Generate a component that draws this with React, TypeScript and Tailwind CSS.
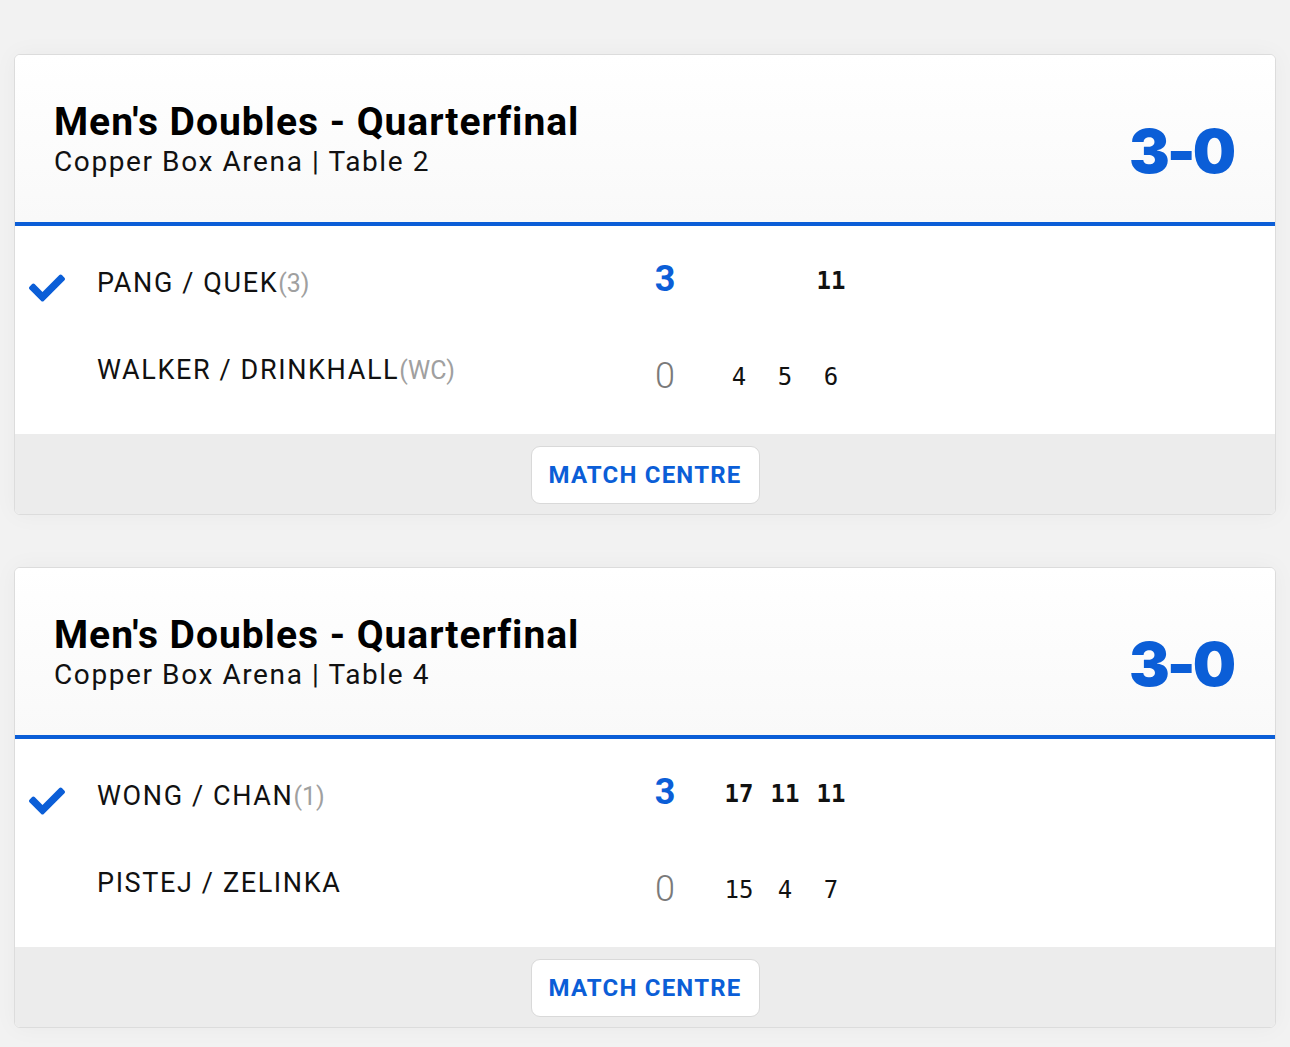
import { FaCheck } from 'react-icons/fa';

interface Team {
  name: string;
  seed?: string;
  sets: number;
  games: (number | null)[];
  winner?: boolean;
}

interface Match {
  title: string;
  venue: string;
  score: string;
  teams: Team[];
}

const matches: Match[] = [
  {
    title: "Men's Doubles - Quarterfinal",
    venue: 'Copper Box Arena | Table 2',
    score: '3-0',
    teams: [
      { name: 'PANG / QUEK', seed: '(3)', sets: 3, games: [null, null, 11], winner: true },
      { name: 'WALKER / DRINKHALL', seed: '(WC)', sets: 0, games: [4, 5, 6] },
    ],
  },
  {
    title: "Men's Doubles - Quarterfinal",
    venue: 'Copper Box Arena | Table 4',
    score: '3-0',
    teams: [
      { name: 'WONG / CHAN', seed: '(1)', sets: 3, games: [17, 11, 11], winner: true },
      { name: 'PISTEJ / ZELINKA', sets: 0, games: [15, 4, 7] },
    ],
  },
];

const TeamRow = ({ team }: { team: Team }) => (
  <div className="flex items-center h-[87px]">
    <div className="w-[82px] flex-shrink-0 pl-[14px] pt-[8px] text-[#0b5ed7]">
      {team.winner && <FaCheck size={36} />}
    </div>
    <div className="w-[544px] flex-shrink-0 flex items-baseline font-['Roboto',sans-serif] text-[27px] tracking-[0.06em] text-[#111]">
      <span>{team.name}</span>
      {team.seed && <span className="text-[25px] text-[#a0a0a0] tracking-normal">{team.seed}</span>}
    </div>
    <div
      className={`w-[48px] text-center font-['Roboto',sans-serif] text-[36px] ${
        team.winner ? 'font-bold text-[#0b5ed7] -mt-[9px]' : 'font-light text-[#7a7a7a] mt-[10px]'
      }`}
    >
      {team.sets}
    </div>
    <div className={`flex ml-[27px] font-['DejaVu_Sans_Mono',monospace] text-[24px] ${team.winner ? 'font-bold -mt-[6px]' : 'mt-[12px]'} text-[#111]`}>
      {team.games.map((g, i) => (
        <span key={i} className="w-[46px] text-center">
          {g ?? ''}
        </span>
      ))}
    </div>
  </div>
);

const MatchCard = ({ match }: { match: Match }) => (
  <div className="bg-white border border-[#dcdcdc] rounded-[6px] shadow-[0_0_24px_rgba(0,0,0,0.04)] overflow-hidden">
    <div className="h-[167px] flex items-center justify-between pl-[39px] pr-[42px] bg-gradient-to-b from-white to-[#f9f9f9]">
      <div className="font-['Roboto',sans-serif] text-black">
        <h2 className="text-[39px] font-bold leading-[46px] tracking-[0.025em]">{match.title}</h2>
        <p className="text-[28px] leading-[34px] tracking-[0.057em] text-[#111]">{match.venue}</p>
      </div>
      <div className="mt-[26px] font-['Inter',sans-serif] font-black text-[61px] leading-none tracking-[-0.05em] text-[#0b5ed7]">
        {match.score}
      </div>
    </div>
    <div className="h-[4px] bg-[#0b5ed7]" />
    <div className="pt-[14px] pb-[20px] bg-white">
      {match.teams.map((t) => (
        <TeamRow key={t.name} team={t} />
      ))}
    </div>
    <div className="h-[80px] bg-[#ececec] flex justify-center pt-[12px]">
      <button className="w-[229px] h-[58px] bg-white border border-[#d9d9d9] rounded-[9px] font-['Roboto',sans-serif] font-bold text-[24px] tracking-[0.05em] text-[#0b5ed7]">
        MATCH CENTRE
      </button>
    </div>
  </div>
);

export default function App() {
  return (
    <div className="min-h-[1047px] bg-[#f2f2f2] pt-[54px] pl-[14px] pr-[14px] flex flex-col gap-[52px]">
      {matches.map((m, i) => (
        <MatchCard key={i} match={m} />
      ))}
    </div>
  );
}
